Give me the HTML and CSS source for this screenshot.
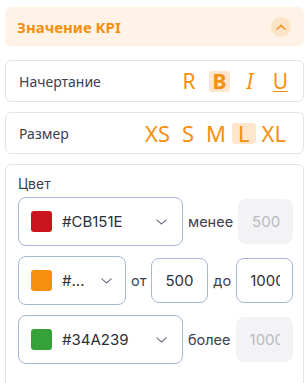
FILE: index.html
```html
<!DOCTYPE html>
<html lang="ru">
<head>
<meta charset="utf-8">
<link rel="stylesheet" href="styles.css">
</head>
<body>
<div class="panel">
  <div class="header">
    <span class="title">Значение KPI</span>
    <span class="collapse">
      <svg width="10" height="6" viewBox="0 0 10 6"><path d="M1 5.2 L5 1.2 L9 5.2" fill="none" stroke="#f5900f" stroke-width="1.3" stroke-linecap="round" stroke-linejoin="round"/></svg>
    </span>
  </div>

  <div class="card row">
    <span class="label">Начертание</span>
    <div class="opts styles">
      <span class="opt">R</span>
      <span class="opt bold active">B</span>
      <span class="opt italic">I</span>
      <span class="opt under">U</span>
    </div>
  </div>

  <div class="card row">
    <span class="label">Размер</span>
    <div class="opts sizes">
      <span class="opt">XS</span>
      <span class="opt">S</span>
      <span class="opt">M</span>
      <span class="opt active">L</span>
      <span class="opt">XL</span>
    </div>
  </div>

  <div class="card color">
    <div class="clabel">Цвет</div>
    <div class="crow">
      <div class="select wide">
        <span class="swatch red"></span>
        <span class="val">#CB151E</span>
        <svg class="chev" width="11" height="6" viewBox="0 0 11 6"><path d="M0.8 0.8 L5.5 5 L10.2 0.8" fill="none" stroke="#6b7280" stroke-width="1.1" stroke-linecap="round" stroke-linejoin="round"/></svg>
      </div>
      <span class="word">менее</span>
      <input class="num" value="500" disabled>
    </div>
    <div class="crow">
      <div class="select narrow">
        <span class="swatch orange"></span>
        <span class="val">#...</span>
        <svg class="chev" width="11" height="6" viewBox="0 0 11 6"><path d="M0.8 0.8 L5.5 5 L10.2 0.8" fill="none" stroke="#6b7280" stroke-width="1.1" stroke-linecap="round" stroke-linejoin="round"/></svg>
      </div>
      <span class="word">от</span>
      <input class="num" value="500">
      <span class="word">до</span>
      <input class="num" value="1000">
    </div>
    <div class="crow">
      <div class="select wide">
        <span class="swatch green"></span>
        <span class="val">#34A239</span>
        <svg class="chev" width="11" height="6" viewBox="0 0 11 6"><path d="M0.8 0.8 L5.5 5 L10.2 0.8" fill="none" stroke="#6b7280" stroke-width="1.1" stroke-linecap="round" stroke-linejoin="round"/></svg>
      </div>
      <span class="word">более</span>
      <input class="num" value="1000" disabled>
    </div>
  </div>
</div>
</body>
</html>
```
FILE: styles.css
```css
html, body {
  margin: 0;
  padding: 0;
  background: #ffffff;
  overflow: hidden;
}
.panel {
  padding: 7px 2px 0 5px;
  display: flex;
  flex-direction: column;
  font-family: "Noto Sans", "Lato", sans-serif;
}
.header {
  height: 39px;
  background: #fef3e6;
  border-radius: 6px;
  display: flex;
  align-items: center;
  justify-content: space-between;
  padding: 0 13px 0 12px;
  margin-bottom: 14px;
}
.title {
  color: #f5900f;
  font-weight: 700;
  font-size: 15px;
}
.collapse {
  width: 20px;
  height: 20px;
  border-radius: 50%;
  background: #fde4c8;
  display: flex;
  align-items: center;
  justify-content: center;
}
.card {
  border: 1px solid #e3e4ea;
  border-radius: 6px;
  margin-bottom: 10px;
}
.row {
  height: 40px;
  display: flex;
  align-items: center;
  justify-content: space-between;
  padding: 0 12px 0 13px;
}
.label {
  font-size: 14px;
  color: #3b4150;
}
.opts {
  display: flex;
  align-items: center;
  color: #f5900f;
  font-size: 21px;
  line-height: 21px;
}
.opt {
  height: 21px;
  display: flex;
  align-items: center;
  justify-content: center;
  border-radius: 3px;
}
.styles {
  gap: 9.5px;
}
.styles .opt {
  width: 21px;
}
.sizes {
  font-size: 22px;
  margin-right: -1px;
}
.sizes .opt {
  padding: 0 6px;
}
.opt.active {
  background: #fde6cc;
}
.bold {
  font-weight: 700;
}
.italic {
  font-style: italic;
}
.under {
  text-decoration: underline;
  text-decoration-thickness: 1px;
  text-underline-offset: 2px;
}
.color {
  padding: 10px 10px 20px 12px;
  margin-bottom: 0;
  border-bottom: none;
  border-radius: 6px 6px 0 0;
  font-family: "Inter", "Noto Sans", sans-serif;
}
.clabel {
  font-size: 14px;
  color: #3b4150;
  line-height: 18px;
  margin-bottom: 4px;
}
.crow {
  display: flex;
  align-items: center;
  gap: 5px;
  margin-bottom: 10px;
}
.select {
  height: 49px;
  box-sizing: border-box;
  border: 1px solid #a8b7d3;
  border-radius: 8px;
  display: flex;
  align-items: center;
  padding: 0 15px 0 12px;
  font-size: 15px;
  color: #2c2f36;
  flex: none;
}
.select.wide {
  width: 165px;
}
.select.narrow {
  width: 108px;
  padding-right: 13px;
}
.swatch {
  width: 21px;
  height: 21px;
  border-radius: 3px;
  margin-right: 10px;
  flex: none;
}
.red { background: #cb151e; }
.orange { background: #f5900f; }
.green { background: #34a239; }
.val {
  flex: 1;
}
.chev {
  flex: none;
}
.word {
  font-size: 14.5px;
  color: #3b4150;
  flex: none;
}
.num {
  width: 58px;
  min-width: 0;
  height: 45px;
  box-sizing: border-box;
  border: 1px solid #a8b7d3;
  border-radius: 8px;
  padding: 0 12px 0 13px;
  margin: 0;
  font-family: "Inter", "Noto Sans", sans-serif;
  font-size: 15px;
  color: #2c2f36;
  background: #ffffff;
  outline: none;
  flex: 0 1 58px;
}
.num:disabled {
  background: #f3f3f5;
  border-color: #f3f3f5;
  color: #b9bac0;
}
```
